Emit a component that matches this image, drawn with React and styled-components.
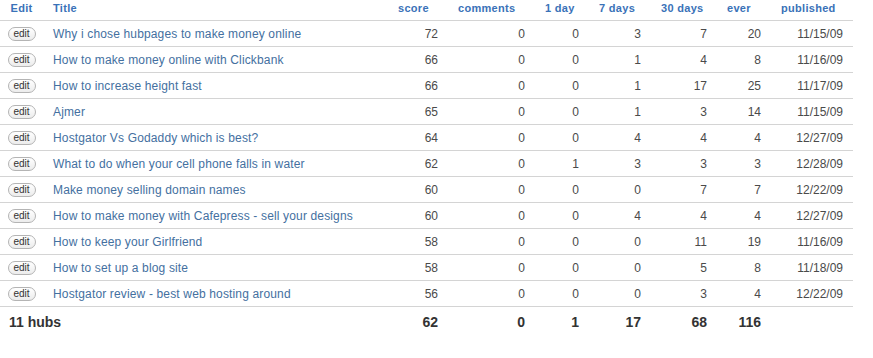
import React from 'react';
import styled, { createGlobalStyle } from 'styled-components';

const hubs = [
  ['Why i chose hubpages to make money online', 72, 0, 0, 3, 7, 20, '11/15/09'],
  ['How to make money online with Clickbank', 66, 0, 0, 1, 4, 8, '11/16/09'],
  ['How to increase height fast', 66, 0, 0, 1, 17, 25, '11/17/09'],
  ['Ajmer', 65, 0, 0, 1, 3, 14, '11/15/09'],
  ['Hostgator Vs Godaddy which is best?', 64, 0, 0, 4, 4, 4, '12/27/09'],
  ['What to do when your cell phone falls in water', 62, 0, 1, 3, 3, 3, '12/28/09'],
  ['Make money selling domain names', 60, 0, 0, 0, 7, 7, '12/22/09'],
  ['How to make money with Cafepress - sell your designs', 60, 0, 0, 4, 4, 4, '12/27/09'],
  ['How to keep your Girlfriend', 58, 0, 0, 0, 11, 19, '11/16/09'],
  ['How to set up a blog site', 58, 0, 0, 0, 5, 8, '11/18/09'],
  ['Hostgator review - best web hosting around', 56, 0, 0, 0, 3, 4, '12/22/09'],
];

const columns = ['score', 'comments', '1 day', '7 days', '30 days', 'ever', 'published'];
const widths = [60, 87, 54, 62, 66, 54, 82];

function App() {
  return (
    <>
      <GlobalStyle />
      <Table>
        <colgroup>
          <col style={{ width: 43 }} />
          <col style={{ width: 345 }} />
          {widths.map((w, i) => <col key={i} style={{ width: w }} />)}
        </colgroup>
        <thead>
          <tr>
            <HeadCell $center>Edit</HeadCell>
            <HeadCell>Title</HeadCell>
            {columns.map(c => <HeadCell key={c}>{c}</HeadCell>)}
          </tr>
        </thead>
        <tbody>
          {hubs.map(([title, ...rest]) => (
            <Row key={title}>
              <EditCell><EditButton>edit</EditButton></EditCell>
              <TitleCell><HubLink href="#">{title}</HubLink></TitleCell>
              {rest.map((v, i) => <NumCell key={i}>{v}</NumCell>)}
            </Row>
          ))}
        </tbody>
        <tfoot>
          <tr>
            <TotalLabel colSpan={2}>11 hubs</TotalLabel>
            {[62, 0, 1, 17, 68, 116].map((v, i) => <TotalCell key={i}>{v}</TotalCell>)}
            <TotalCell />
          </tr>
        </tfoot>
      </Table>
    </>
  );
}

export default App;

//Styled Components
const GlobalStyle = createGlobalStyle`
  body {
    margin: 0;
    background: #fff;
    font-family: "Liberation Sans", Arial, sans-serif;
  }
`;

const Table = styled.table`
  width: 853px;
  border-collapse: collapse;
  table-layout: fixed;
  font-size: 12px;
`;

const HeadCell = styled.th`
  height: 19px;
  padding: 1px 0 0 ${p => (p.$center ? 0 : 10)}px;
  text-align: ${p => (p.$center ? 'center' : 'left')};
  vertical-align: top;
  color: #3a72b8;
  font-size: 11px;
  font-weight: bold;
  letter-spacing: 0.3px;
  line-height: 14px;
  border-bottom: 1px solid #d4d4d4;
`;

const Row = styled.tr`
  height: 26px;
  border-bottom: 1px solid #d4d4d4;
`;

const EditCell = styled.td`
  text-align: center;
  padding: 0;
`;

const EditButton = styled.span`
  display: inline-block;
  width: 26px;
  height: 12px;
  line-height: 12px;
  border: 1px solid #b4b4b4;
  border-radius: 7px;
  background: linear-gradient(#ffffff, #ececec);
  color: #333;
  font-size: 10px;
  text-align: center;
  vertical-align: middle;
`;

const TitleCell = styled.td`
  padding: 0 0 0 10px;
  white-space: nowrap;
  overflow: hidden;
  letter-spacing: 0.15px;
`;

const HubLink = styled.a`
  color: #44709f;
  text-decoration: none;
`;

const NumCell = styled.td`
  padding: 0 10px 0 0;
  text-align: right;
  color: #4a4a4a;
`;

const TotalLabel = styled.td`
  height: 30px;
  padding: 0 0 0 9px;
  color: #333;
  font-size: 14px;
  font-weight: bold;
`;

const TotalCell = styled.td`
  padding: 0 10px 0 0;
  text-align: right;
  color: #333;
  font-size: 14px;
  font-weight: bold;
`;
